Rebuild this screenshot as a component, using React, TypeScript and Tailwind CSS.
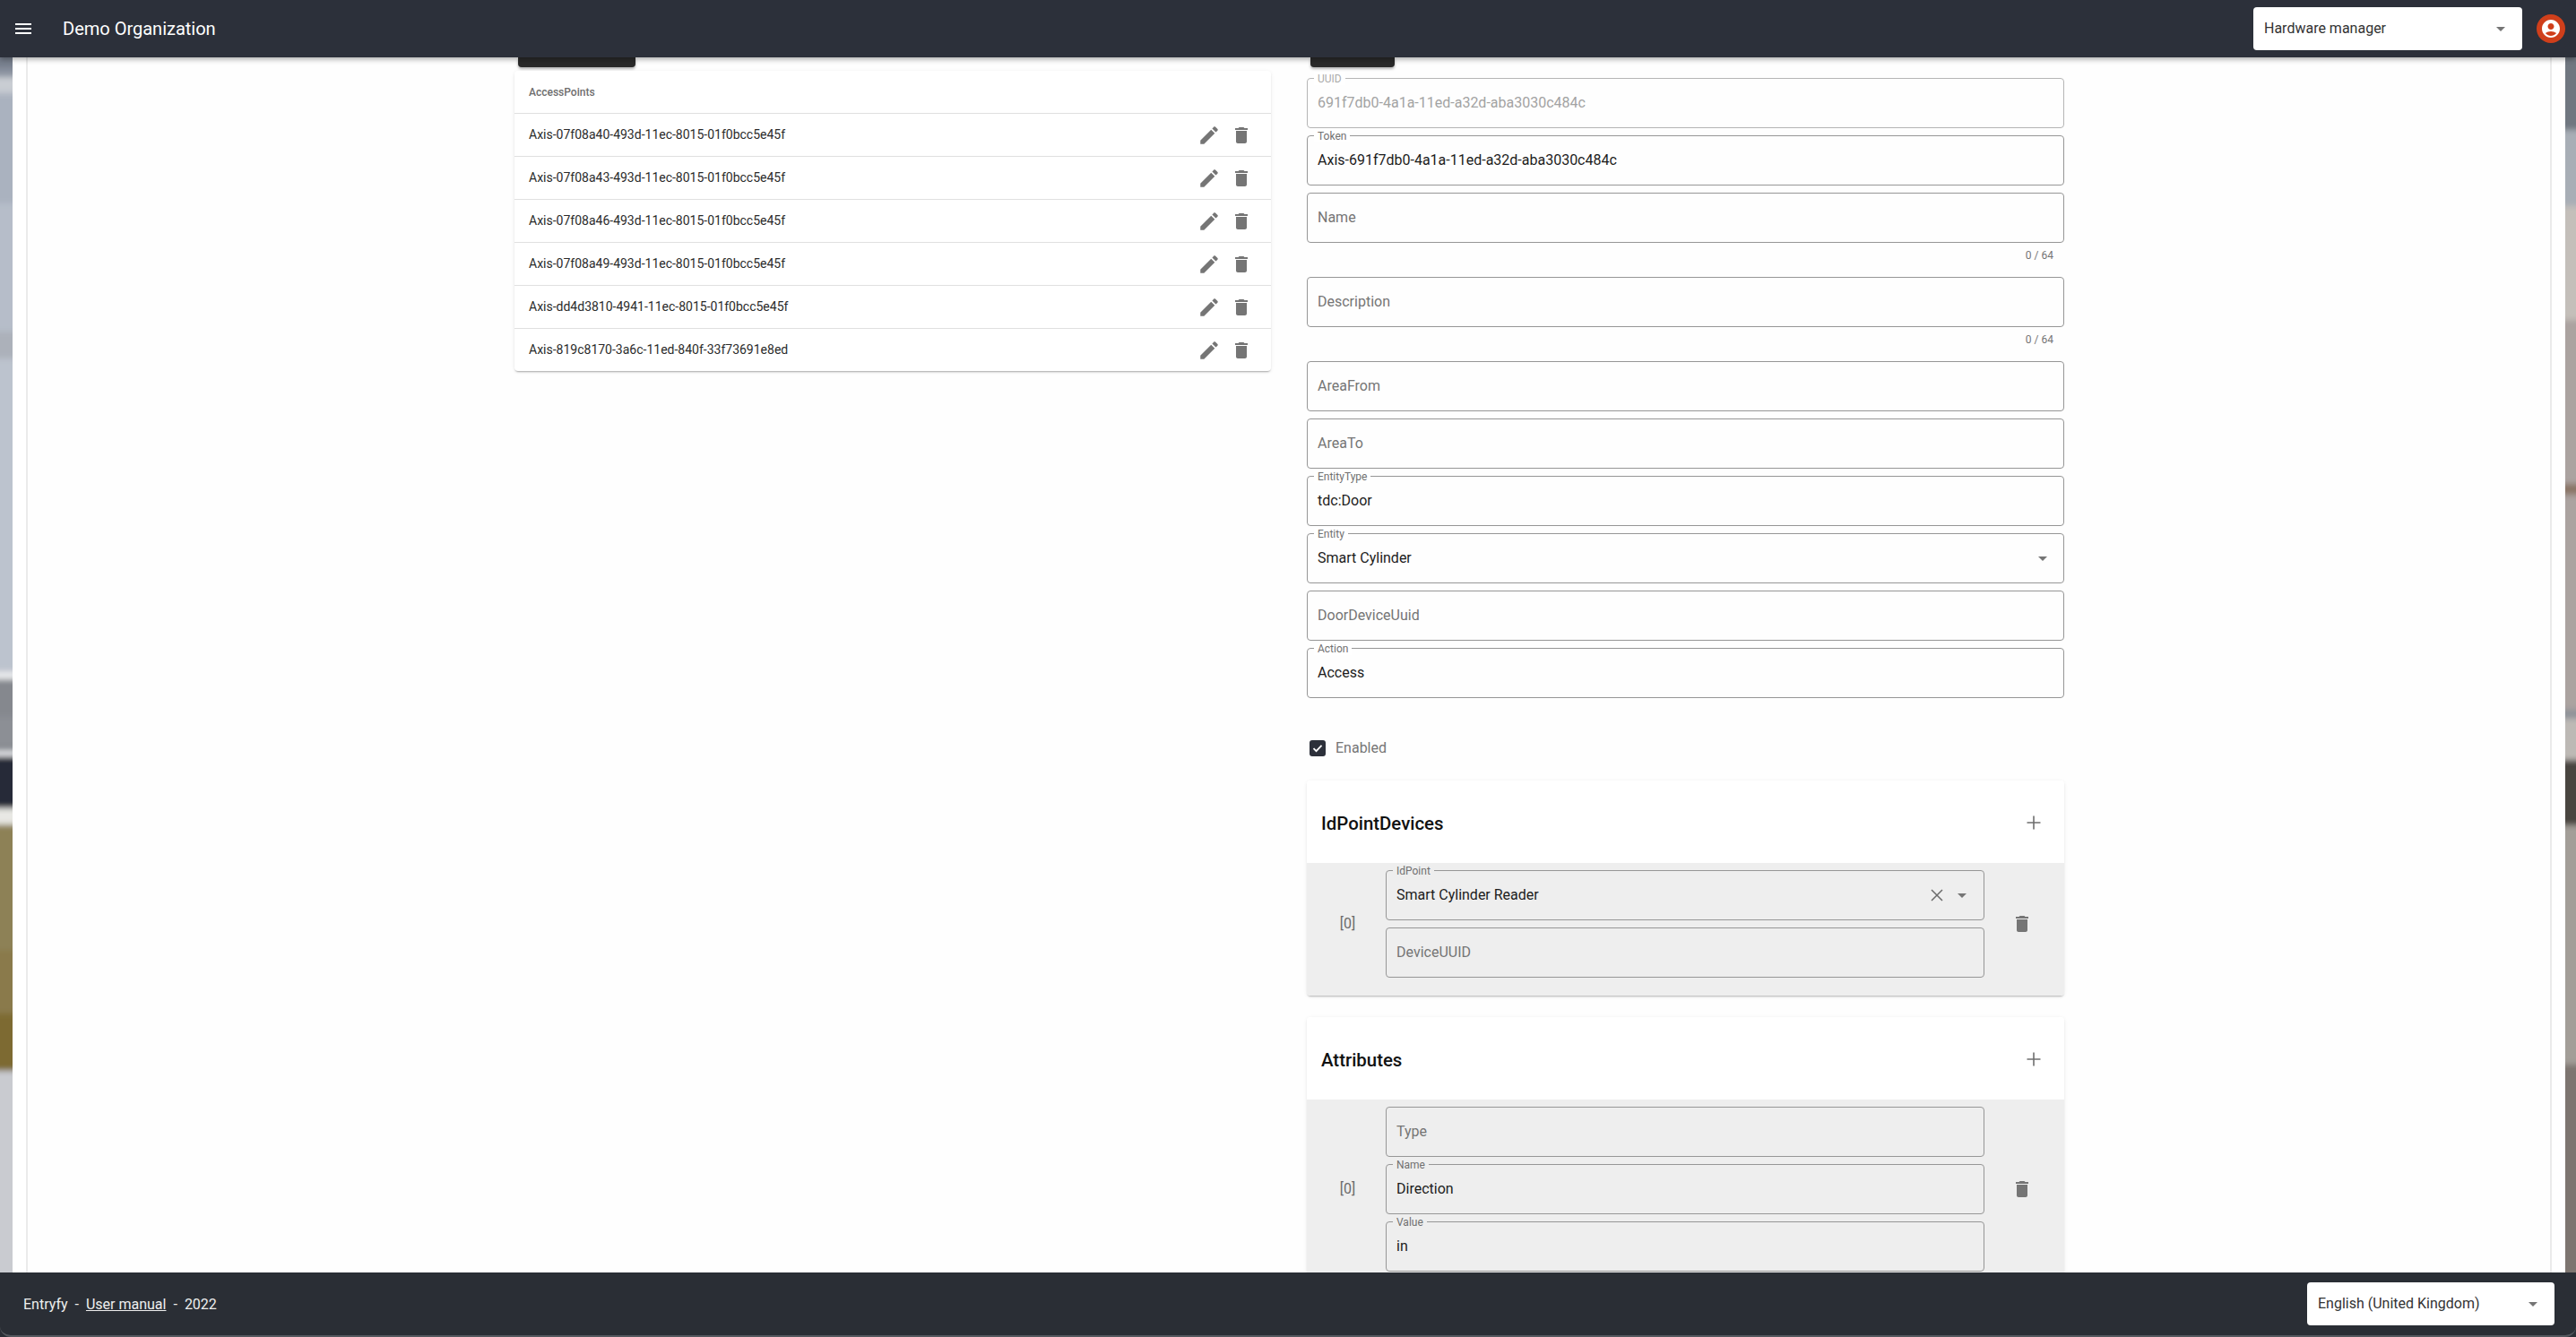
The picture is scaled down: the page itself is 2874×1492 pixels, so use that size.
import React from "react";

const EDIT = "M3 17.25V21h3.75L17.81 9.94l-3.75-3.75L3 17.25zM20.71 7.04c.39-.39.39-1.02 0-1.41l-2.34-2.34c-.39-.39-1.02-.39-1.41 0l-1.83 1.83 3.75 3.75 1.83-1.83z";
const TRASH = "M6 19c0 1.1.9 2 2 2h8c1.1 0 2-.9 2-2V7H6v12zM19 4h-3.5l-1-1h-5l-1 1H5v2h14V4z";
const ACCOUNT = "M12 2C6.48 2 2 6.48 2 12s4.48 10 10 10 10-4.48 10-10S17.52 2 12 2zm0 4c1.93 0 3.5 1.57 3.5 3.5S13.93 13 12 13s-3.5-1.57-3.5-3.5S10.07 6 12 6zm0 14c-2.03 0-4.43-.82-6.14-2.88C7.55 15.8 9.68 15 12 15s4.45.8 6.14 2.12C16.43 19.18 14.03 20 12 20z";

function Icon({ d, size = 24, className = "" }: { d: string; size?: number; className?: string }) {
  return (
    <svg width={size} height={size} viewBox="0 0 24 24" fill="currentColor" className={className}>
      <path d={d} />
    </svg>
  );
}

function Caret({ className = "" }: { className?: string }) {
  return (
    <svg width="10" height="5" viewBox="0 0 10 5" fill="currentColor" className={className}>
      <path d="M0 0l5 5 5-5z" />
    </svg>
  );
}

const LEFT: [number, string][] = [
  [40, "#767e8c"], [76, "#8b93a0"], [86, "#c9cdd3"], [98, "#c8ccd2"], [104, "#aab2bf"], [227, "#b6bdc9"], [370, "#acb1ba"], [400, "#bcc3ce"],
  [748, "#c4c8ce"], [750, "#eceef0"], [758, "#85888e"], [800, "#8c8f95"], [834, "#7f8288"], [838, "#e9ebee"], [844, "#252a38"], [902, "#e8e8e4"],
  [920, "#8d8156"], [1060, "#8a7a4c"], [1131, "#7d6a30"], [1195, "#c9cbd0"], [1460, "#c6c8ce"],
];
const RIGHT: [number, string][] = [
  [40, "#6f7780"], [145, "#a8aeb6"], [230, "#c4bfba"], [357, "#aba3a0"], [540, "#8a7565"], [552, "#aba3a0"],
  [790, "#aba3a0"], [792, "#8d9298"], [802, "#bdb9b5"], [848, "#4a4540"], [921, "#a39e98"], [1188, "#7d7570"], [1460, "#7d7570"],
];

function Strip({ data, side, id, width }: { data: [number, string][]; side: "left" | "right"; id: string; width: number }) {
  return (
    <svg
      className={`absolute top-0 h-full ${side === "left" ? "left-0" : "right-0"}`}
      width={width}
      viewBox={`0 64 ${width} 1356`}
      preserveAspectRatio="none"
    >
      <defs>
        <filter id={id} x="0" y="0" width="1" height="1">
          <feGaussianBlur stdDeviation="0 3" />
        </filter>
      </defs>
      <g filter={`url(#${id})`}>
        {data.slice(0, -1).map(([y, c], i) => (
          <rect key={i} x="0" y={y} width={width} height={data[i + 1][0] - y} fill={c} />
        ))}
      </g>
    </svg>
  );
}

function Field({
  label,
  value,
  disabled,
  bg = "bg-white",
  right,
}: {
  label: string;
  value?: string;
  disabled?: boolean;
  bg?: string;
  right?: React.ReactNode;
}) {
  return (
    <div
      className={`relative h-[56px] rounded-[4px] border flex items-center pl-[11px] pr-[12px] ${
        disabled ? "border-[#b5b5b5]" : "border-[#969696]"
      }`}
    >
      {value ? (
        <span className={`absolute left-[7px] top-[-7px] ${bg} px-[4px] text-[12px] leading-[14px] ${disabled ? "text-[#aaaaaa]" : "text-[#707070]"}`}>
          {label}
        </span>
      ) : null}
      <span className={`flex-1 text-[16px] ${value ? (disabled ? "text-[#a3a3a3]" : "text-[#1c1c1c]") : "text-[#757575]"}`}>
        {value || label}
      </span>
      {right}
    </div>
  );
}

function Counter() {
  return <div className="h-[38px] pt-[5px] pr-[12px] text-right text-[12px] leading-[18px] text-[#757575]">0 / 64</div>;
}

function Row({ id }: { id: string }) {
  return (
    <div className="h-[48px] flex items-center border-t border-[#e0e0e0] pl-[16px] pr-[21px]">
      <span className="flex-1 text-[14px] text-[#2b2b2b]">{id}</span>
      <Icon d={EDIT} size={26} className="text-[#757575]" />
      <Icon d={TRASH} size={24} className="text-[#757575] ml-[11px]" />
    </div>
  );
}

function Section({ title, children }: { title: string; children: React.ReactNode }) {
  return (
    <div className="rounded-[4px] shadow-[0_2px_2px_-1px_rgba(0,0,0,0.25),0_1px_4px_0_rgba(0,0,0,0.08)] overflow-hidden">
      <div className="h-[92px] bg-white flex items-center justify-between pl-[16px] pr-[26px]">
        <span className="text-[20.4px] font-medium text-[#111111] translate-y-[2px]">{title}</span>
        <svg width="16" height="16" viewBox="0 0 16 16" stroke="#6f6f6f" strokeWidth="1.6" className="translate-y-[1px]">
          <path d="M8 0.5v15M0.5 8h15" />
        </svg>
      </div>
      {children}
    </div>
  );
}

function ArrayItem({ children }: { children: React.ReactNode }) {
  return (
    <div className="flex items-center bg-[#eeeeee]">
      <span className="w-[88px] pl-[3px] text-center text-[16px] text-[#6b6b6b]">[0]</span>
      <div className="w-[668px] flex flex-col gap-[8px]">{children}</div>
      <div className="flex-1 flex justify-center">
        <Icon d={TRASH} size={24} className="text-[#757575] -translate-x-[3px]" />
      </div>
    </div>
  );
}

const ROWS = [
  "Axis-07f08a40-493d-11ec-8015-01f0bcc5e45f",
  "Axis-07f08a43-493d-11ec-8015-01f0bcc5e45f",
  "Axis-07f08a46-493d-11ec-8015-01f0bcc5e45f",
  "Axis-07f08a49-493d-11ec-8015-01f0bcc5e45f",
  "Axis-dd4d3810-4941-11ec-8015-01f0bcc5e45f",
  "Axis-819c8170-3a6c-11ed-840f-33f73691e8ed",
];

export default function App() {
  return (
    <div className="h-screen w-full flex flex-col overflow-hidden relative bg-[#2a2e35] font-['Roboto',sans-serif]">
      <header className="relative z-10 h-[64px] shrink-0 bg-[#2c303a] flex items-center shadow-[0_2px_6px_rgba(0,0,0,0.35)]">
        <div className="ml-[17px] w-[18px] h-[12px] flex flex-col justify-between">
          <div className="h-[2px] bg-white" />
          <div className="h-[2px] bg-white" />
          <div className="h-[2px] bg-white" />
        </div>
        <span className="ml-[35px] text-[20px] text-white">Demo Organization</span>
        <div className="ml-auto w-[300px] h-[48px] bg-white rounded-[4px] flex items-center pl-[12px] pr-[19px] text-[16px] text-[#333333]">
          <span className="flex-1">Hardware manager</span>
          <Caret className="text-[#757575]" />
        </div>
        <div className="ml-[16px] mr-[12px] w-[32px] h-[32px] rounded-full bg-[#cf3f1b] flex items-center justify-center text-white">
          <Icon d={ACCOUNT} size={24} />
        </div>
      </header>

      <main className="relative flex-1 min-h-0 overflow-hidden bg-[#b5b5b5]">
        <Strip data={LEFT} side="left" id="stripL" width={14} />
        <Strip data={RIGHT} side="right" id="stripR" width={12} />
        <div className="relative h-full ml-[14px] mr-[12px] bg-white px-[15px]">
          <div className="h-full border-x-2 border-[#ebebeb] flex pl-[543px] gap-[40px] bg-[#fefefe]">
            <div className="w-[844px] shrink-0">
              <div className="ml-[4px] w-[131px] h-[11px] bg-[#2a2a2a] rounded-b-[4px] shadow-[0_2px_3px_rgba(0,0,0,0.3)]" />
              <div className="mt-[4px] bg-white rounded-[4px] shadow-[0_2px_2px_-1px_rgba(0,0,0,0.3),0_1px_4px_0_rgba(0,0,0,0.08)]">
                <div className="h-[47px] flex items-center pl-[16px] text-[12px] font-medium text-[#6e6e6e]">AccessPoints</div>
                {ROWS.map((r) => (
                  <Row key={r} id={r} />
                ))}
              </div>
            </div>
            <div className="w-[845px] shrink-0">
              <div className="ml-[4px] w-[94px] h-[11px] bg-[#2a2a2a] rounded-b-[4px] shadow-[0_2px_3px_rgba(0,0,0,0.3)]" />
              <div className="mt-[12px] flex flex-col">
                <div className="flex flex-col gap-[8px]">
                  <Field label="UUID" value="691f7db0-4a1a-11ed-a32d-aba3030c484c" disabled />
                  <Field label="Token" value="Axis-691f7db0-4a1a-11ed-a32d-aba3030c484c" />
                  <div>
                    <Field label="Name" />
                    <Counter />
                  </div>
                </div>
                <Field label="Description" />
                <Counter />
                <div className="flex flex-col gap-[8px]">
                  <Field label="AreaFrom" />
                  <Field label="AreaTo" />
                  <Field label="EntityType" value="tdc:Door" />
                  <Field label="Entity" value="Smart Cylinder" right={<Caret className="text-[#757575] mr-[6px]" />} />
                  <Field label="DoorDeviceUuid" />
                  <Field label="Action" value="Access" />
                </div>
                <div className="mt-[47px] ml-[3px] flex items-center h-[18px]">
                  <span className="w-[18px] h-[18px] rounded-[3px] bg-[#2c303a] flex items-center justify-center">
                    <svg width="14" height="14" viewBox="0 0 14 14" fill="none" stroke="white" strokeWidth="1.8">
                      <path d="M2.5 7.2l3 3 6-6.4" />
                    </svg>
                  </span>
                  <span className="ml-[11px] text-[16px] text-[#757575]">Enabled</span>
                </div>
                <div className="mt-[27px] flex flex-col gap-[24px]">
                  <Section title="IdPointDevices">
                    <div className="bg-[#eeeeee] pt-[8px] pb-[20px]">
                      <ArrayItem>
                        <Field
                          label="IdPoint"
                          value="Smart Cylinder Reader"
                          bg="bg-[#eeeeee]"
                          right={
                            <span className="flex items-center gap-[16px] pr-[7px] text-[#6b6b6b]">
                              <svg width="14" height="14" viewBox="0 0 14 14" stroke="currentColor" strokeWidth="1.5">
                                <path d="M1 1l12 12M13 1L1 13" />
                              </svg>
                              <Caret className="text-[#757575]" />
                            </span>
                          }
                        />
                        <Field label="DeviceUUID" />
                      </ArrayItem>
                    </div>
                  </Section>
                  <Section title="Attributes">
                    <div className="bg-[#eeeeee] pt-[8px] pb-[20px]">
                      <ArrayItem>
                        <Field label="Type" />
                        <Field label="Name" value="Direction" bg="bg-[#eeeeee]" />
                        <Field label="Value" value="in" bg="bg-[#eeeeee]" />
                      </ArrayItem>
                    </div>
                  </Section>
                </div>
              </div>
            </div>
          </div>
        </div>
      </main>

      <footer className="h-[72px] shrink-0 bg-[#2a2e35] flex items-center pl-[26px] pr-[24px] text-[16px] text-[#eeeeee] border-b-2 border-[#55595f] rounded-b-[12px]">
        <span className="translate-y-[1px]">Entryfy</span>
        <span className="mx-[8px] translate-y-[1px]">-</span>
        <span className="underline translate-y-[1px]">User manual</span>
        <span className="mx-[8px] translate-y-[1px]">-</span>
        <span className="translate-y-[1px]">2022</span>
        <div className="ml-auto w-[276px] h-[48px] bg-white rounded-[4px] flex items-center pl-[12px] pr-[19px] text-[#333333]">
          <span className="flex-1">English (United Kingdom)</span>
          <Caret className="text-[#757575]" />
        </div>
      </footer>
    </div>
  );
}
